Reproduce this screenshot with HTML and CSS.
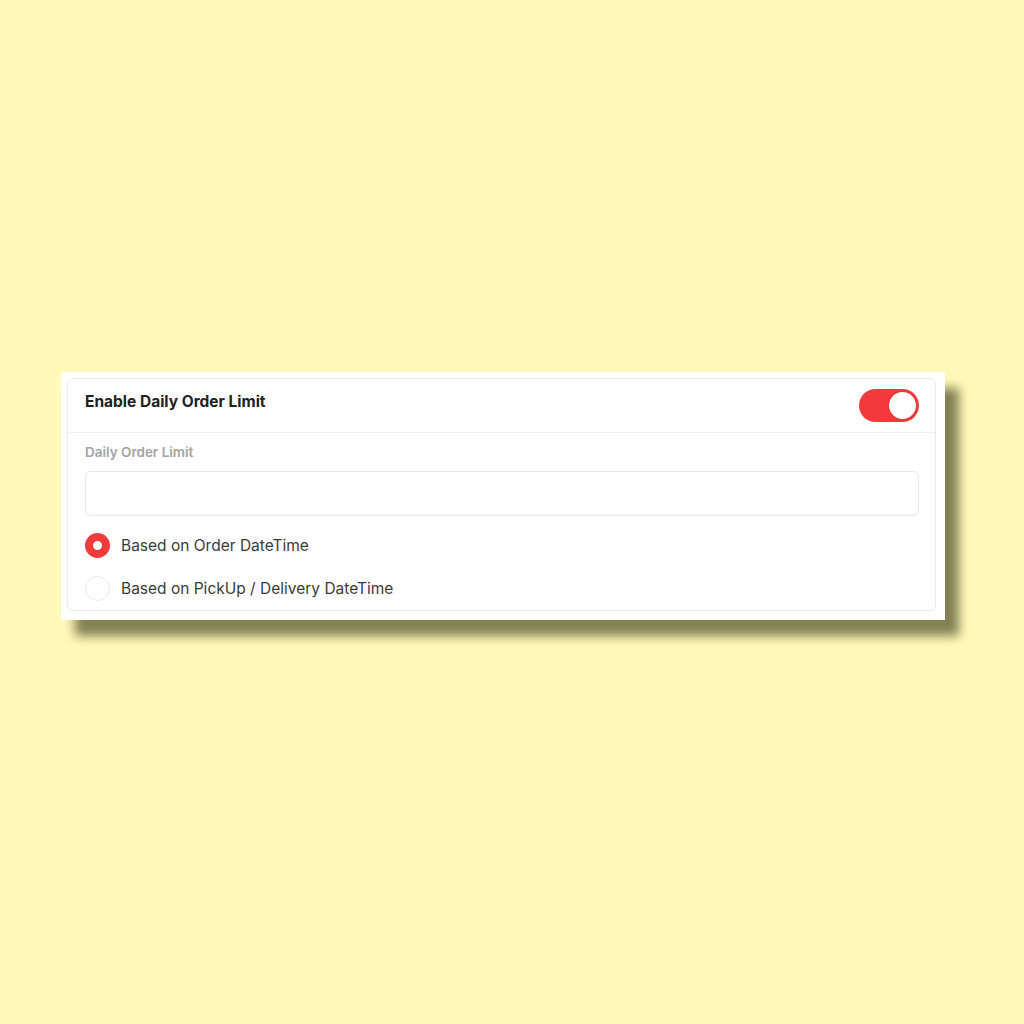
FILE: index.html
```html
<!DOCTYPE html>
<html lang="en">
<head>
  <meta charset="UTF-8">
  <meta name="viewport" content="width=device-width, initial-scale=1">
  <title>Daily Order Limit</title>
  <link rel="stylesheet" href="styles.css">
</head>
<body>
  <div class="frame">
    <div class="card">
      <div class="card-head">
        <span class="title">Enable Daily Order Limit</span>
        <span class="toggle on"><span class="knob"></span></span>
      </div>
      <div class="card-body">
        <label class="field-label">Daily Order Limit</label>
        <input type="text" class="field">

        <div class="radio-row">
          <span class="radio checked"></span>
          <span>Based on Order DateTime</span>
        </div>
        <div class="radio-row">
          <span class="radio"></span>
          <span>Based on PickUp / Delivery DateTime</span>
        </div>
      </div>
    </div>
  </div>
</body>
</html>
```

FILE: styles.css
```css
body {
  margin: 0;
  background-color: #fffab8;
  font-family: 'Inter', 'Noto Sans', sans-serif;
  color: #333;
  height: 1024px;
}
.frame {
  position: relative;
  top: 372px;
  left: 61px;
  width: 869px;
  background: #fff;
  padding: 6px 9px 9px 6px;
  box-shadow: 14px 16px 10px rgba(30, 28, 0, 0.55);
}
.card {
  border: 1px solid #ebebeb;
  border-radius: 6px;
}
.card-head {
  height: 53px;
  display: flex;
  align-items: center;
  justify-content: space-between;
  padding: 0 16px 0 17px;
  border-bottom: 1px solid #efefef;
}
.title {
  font-size: 15.5px;
  font-weight: 700;
  color: #222;
  margin-top: -8px;
}
.toggle {
  width: 60px;
  height: 33px;
  border-radius: 17px;
  background: #ddd;
  display: flex;
  align-items: center;
  padding: 0 3px;
  box-sizing: border-box;
}
.toggle.on {
  background: #f2393c;
  justify-content: flex-end;
}
.knob {
  width: 27px;
  height: 27px;
  border-radius: 50%;
  background: #fff;
  box-shadow: 0 0 1px rgba(0, 0, 0, 0.3);
}
.card-body {
  padding: 11px 16px 9px 17px;
}
.field-label {
  display: block;
  font-size: 13.5px;
  font-weight: 600;
  color: #a3a3a3;
  line-height: 16px;
  margin-bottom: 11px;
}
.field {
  display: block;
  width: 100%;
  height: 45px;
  box-sizing: border-box;
  border: 1px solid #e3e6ea;
  border-radius: 6px;
  margin-bottom: 17px;
}
.radio-row {
  display: flex;
  align-items: center;
  gap: 11px;
  height: 25px;
  font-size: 15.5px;
  color: #3b3b3b;
  margin-bottom: 18px;
}
.radio-row:last-child {
  margin-bottom: 0;
}
.radio {
  width: 25px;
  height: 25px;
  box-sizing: border-box;
  border-radius: 50%;
  border: 1px solid #ececec;
  background: #fff;
}
.radio.checked {
  border: 8px solid #f2393c;
}
```
